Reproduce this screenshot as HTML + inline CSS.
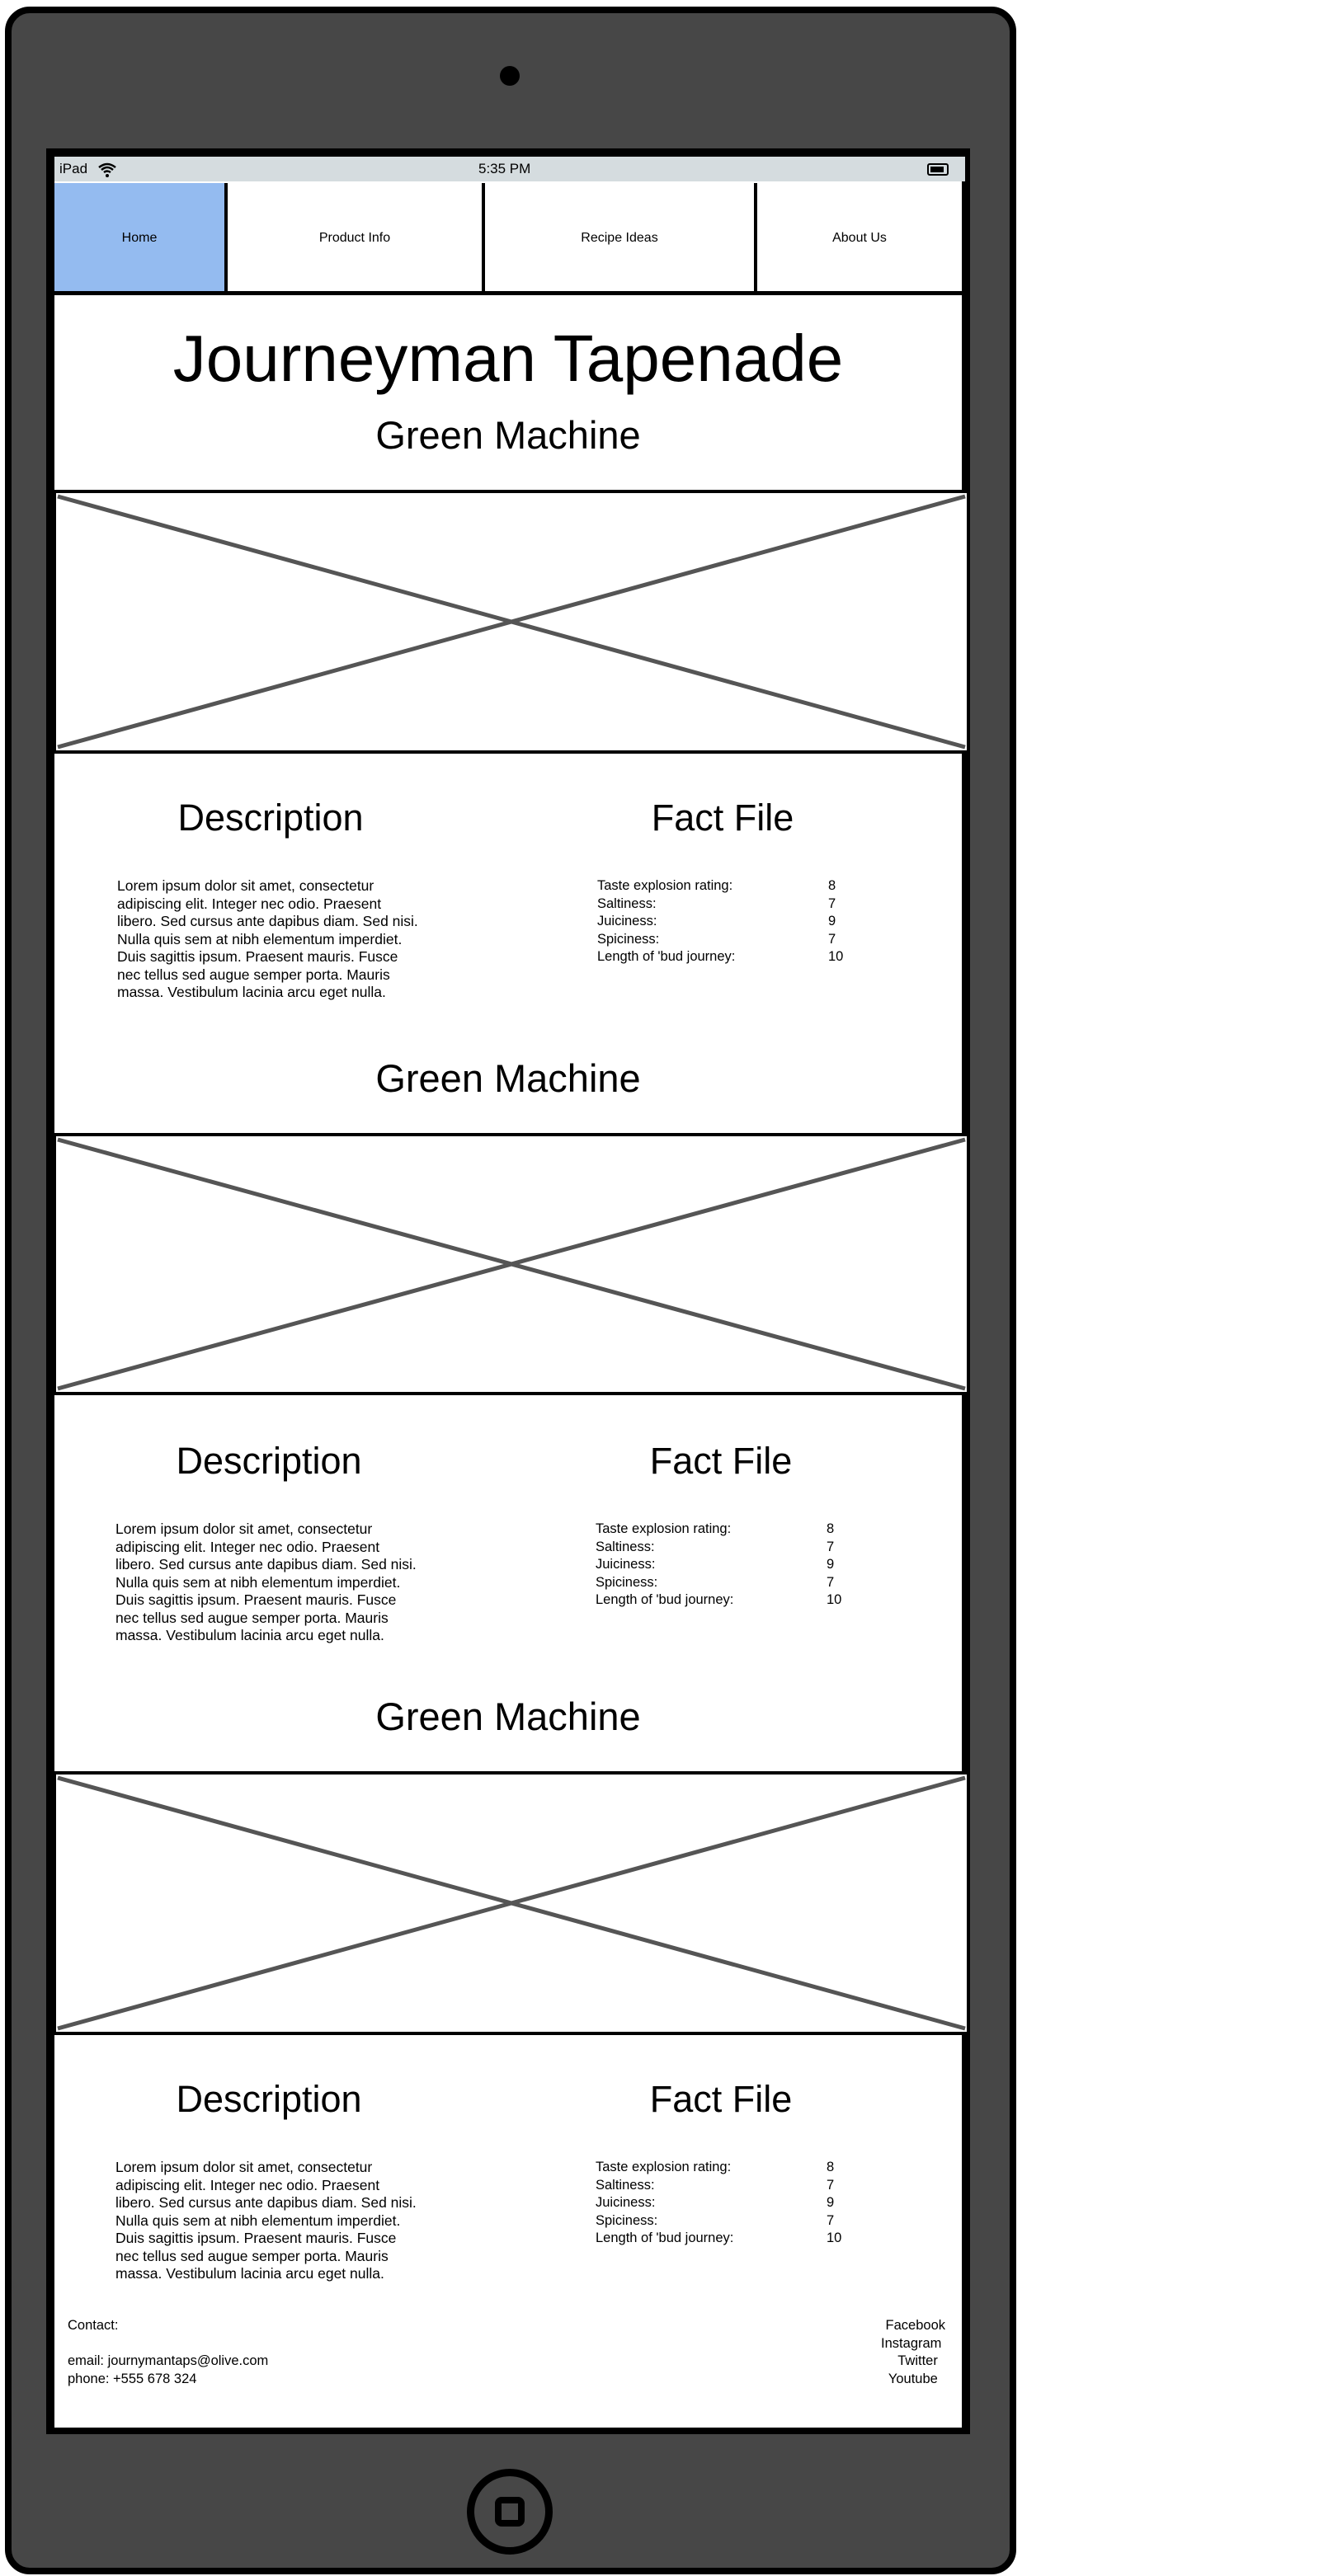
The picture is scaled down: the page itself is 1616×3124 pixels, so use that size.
<!DOCTYPE html>
<html><head><meta charset="utf-8"><style>
*{margin:0;padding:0;box-sizing:border-box}
body{width:1616px;height:3124px;background:#fff;position:relative;overflow:hidden;font-family:"Liberation Sans",sans-serif;color:#000}
.a{position:absolute}
.c{position:absolute;text-align:center;white-space:nowrap}
.lorem{position:absolute;font-size:17.5px;line-height:21.5px;width:440px;white-space:nowrap}
.ff{position:absolute;font-size:16.5px;line-height:21.5px}
.ff div{position:relative;height:21.5px}
.ff span{position:absolute;left:280px}
</style></head><body>
<div class="a" style="left:6px;top:8px;width:1226px;height:3114px;background:#474747;border:8px solid #000;border-radius:30px"></div>
<div class="a" style="left:606px;top:80px;width:24px;height:24px;border-radius:50%;background:#000"></div>
<div class="a" style="left:56px;top:180px;width:1120px;height:2772px;background:#000"></div>
<div class="a" style="left:66px;top:190px;width:1100px;height:2754px;background:#fff"></div>
<!-- status bar -->
<div class="a" style="left:66px;top:190px;width:1104px;height:30px;background:#d5dcdf;font-size:17px;line-height:30px">
 <span class="a" style="left:6px">iPad</span>
 <svg class="a" style="left:52px;top:6px" width="24" height="20" viewBox="0 0 24 20"><path d="M2 7 Q12 -1 22 7 M5 10 Q12 4 19 10 M8 13 Q12 10 16 13" stroke="#000" stroke-width="2.5" fill="none"/><circle cx="12" cy="17" r="2" fill="#000"/></svg>
 <span class="a" style="left:514px">5:35 PM</span>
 <div class="a" style="left:1058px;top:8px;width:26px;height:15px;border:2px solid #000;border-radius:3px"><div style="margin:2px;width:16px;height:7px;background:#000"></div></div>
</div>
<!-- nav -->
<div class="a" style="left:66px;top:222px;width:1106px;height:136px;border-bottom:5px solid #000;background:#fff"></div>
<div class="a" style="left:66px;top:222px;width:206px;height:131px;background:#94bbf0"></div>
<div class="a" style="left:272px;top:222px;width:4px;height:134px;background:#000"></div>
<div class="a" style="left:584px;top:222px;width:4px;height:134px;background:#000"></div>
<div class="a" style="left:914px;top:222px;width:4px;height:134px;background:#000"></div>
<div class="a" style="left:1166px;top:222px;width:6px;height:136px;background:#000"></div>
<div class="c" style="left:66px;top:280px;width:206px;font-size:16px">Home</div>
<div class="c" style="left:276px;top:280px;width:308px;font-size:16px">Product Info</div>
<div class="c" style="left:588px;top:280px;width:326px;font-size:16px">Recipe Ideas</div>
<div class="c" style="left:918px;top:280px;width:248px;font-size:16px">About Us</div>
<!-- header -->
<div class="c" style="left:66px;top:390px;width:1100px;font-size:80px;line-height:90px">Journeyman Tapenade</div>
<div class="c" style="left:66px;top:500px;width:1100px;font-size:47px;line-height:56px">Green Machine</div>

<!-- image placeholders -->
<svg class="a" style="left:64px;top:594px" width="1112" height="320"><rect x="2" y="2" width="1108" height="316" fill="#fff" stroke="#000" stroke-width="4"/><path d="M6 8 L1106 312 M6 312 L1106 8" stroke="#555" stroke-width="5"/></svg>
<svg class="a" style="left:64px;top:1374px" width="1112" height="318"><rect x="2" y="2" width="1108" height="314" fill="#fff" stroke="#000" stroke-width="4"/><path d="M6 8 L1106 310 M6 310 L1106 8" stroke="#555" stroke-width="5"/></svg>
<svg class="a" style="left:64px;top:2148px" width="1112" height="320"><rect x="2" y="2" width="1108" height="316" fill="#fff" stroke="#000" stroke-width="4"/><path d="M6 8 L1106 312 M6 312 L1106 8" stroke="#555" stroke-width="5"/></svg>

<!-- section 1 -->
<div class="c" style="left:128px;top:964px;width:400px;font-size:45px;line-height:56px">Description</div>
<div class="c" style="left:676px;top:964px;width:400px;font-size:45px;line-height:56px">Fact File</div>
<div class="lorem" style="left:142px;top:1064px">Lorem ipsum dolor sit amet, consectetur<br>adipiscing elit. Integer nec odio. Praesent<br>libero. Sed cursus ante dapibus diam. Sed nisi.<br>Nulla quis sem at nibh elementum imperdiet.<br>Duis sagittis ipsum. Praesent mauris. Fusce<br>nec tellus sed augue semper porta. Mauris<br>massa. Vestibulum lacinia arcu eget nulla.</div>
<div class="ff" style="left:724px;top:1064px"><div>Taste explosion rating:<span>8</span></div><div>Saltiness:<span>7</span></div><div>Juiciness:<span>9</span></div><div>Spiciness:<span>7</span></div><div>Length of 'bud journey:<span>10</span></div></div>
<div class="c" style="left:66px;top:1280px;width:1100px;font-size:47px;line-height:56px">Green Machine</div>

<!-- section 2 -->
<div class="c" style="left:126px;top:1744px;width:400px;font-size:45px;line-height:56px">Description</div>
<div class="c" style="left:674px;top:1744px;width:400px;font-size:45px;line-height:56px">Fact File</div>
<div class="lorem" style="left:140px;top:1844px">Lorem ipsum dolor sit amet, consectetur<br>adipiscing elit. Integer nec odio. Praesent<br>libero. Sed cursus ante dapibus diam. Sed nisi.<br>Nulla quis sem at nibh elementum imperdiet.<br>Duis sagittis ipsum. Praesent mauris. Fusce<br>nec tellus sed augue semper porta. Mauris<br>massa. Vestibulum lacinia arcu eget nulla.</div>
<div class="ff" style="left:722px;top:1844px"><div>Taste explosion rating:<span>8</span></div><div>Saltiness:<span>7</span></div><div>Juiciness:<span>9</span></div><div>Spiciness:<span>7</span></div><div>Length of 'bud journey:<span>10</span></div></div>
<div class="c" style="left:66px;top:2054px;width:1100px;font-size:47px;line-height:56px">Green Machine</div>

<!-- section 3 -->
<div class="c" style="left:126px;top:2518px;width:400px;font-size:45px;line-height:56px">Description</div>
<div class="c" style="left:674px;top:2518px;width:400px;font-size:45px;line-height:56px">Fact File</div>
<div class="lorem" style="left:140px;top:2618px">Lorem ipsum dolor sit amet, consectetur<br>adipiscing elit. Integer nec odio. Praesent<br>libero. Sed cursus ante dapibus diam. Sed nisi.<br>Nulla quis sem at nibh elementum imperdiet.<br>Duis sagittis ipsum. Praesent mauris. Fusce<br>nec tellus sed augue semper porta. Mauris<br>massa. Vestibulum lacinia arcu eget nulla.</div>
<div class="ff" style="left:722px;top:2618px"><div>Taste explosion rating:<span>8</span></div><div>Saltiness:<span>7</span></div><div>Juiciness:<span>9</span></div><div>Spiciness:<span>7</span></div><div>Length of 'bud journey:<span>10</span></div></div>

<!-- footer -->
<div class="a" style="left:82px;top:2810px;font-size:16.5px;line-height:21.5px">Contact:<br><br>email: journymantaps@olive.com<br>phone: +555 678 324</div>
<div class="a" style="left:1000px;top:2810px;width:146px;font-size:16.5px;line-height:21.5px;text-align:right">Facebook<br>Instagram&nbsp;<br>Twitter&nbsp;&nbsp;<br>Youtube&nbsp;&nbsp;</div>

<!-- home button -->
<div class="a" style="left:566px;top:2994px;width:104px;height:104px;border:9px solid #000;border-radius:50%"></div>
<div class="a" style="left:600px;top:3028px;width:36px;height:36px;border:8px solid #000;border-radius:8px"></div>
</body></html>
